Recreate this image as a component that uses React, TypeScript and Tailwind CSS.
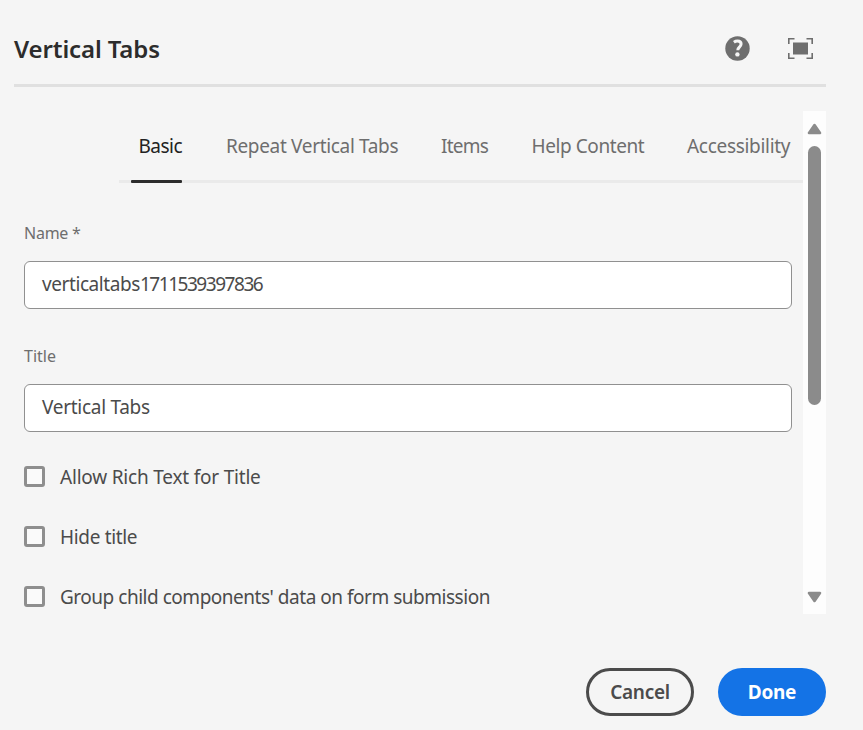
type Item = { label: string; className: string };

const tabs: Item[] = [
  { label: "Basic", className: "w-[87.5px] tracking-[-0.5px] text-[#222]" },
  { label: "Repeat Vertical Tabs", className: "w-[215px] tracking-[-0.33px]" },
  { label: "Items", className: "w-[90.5px] tracking-[-0.75px]" },
  { label: "Help Content", className: "w-[155.5px] tracking-[-0.42px]" },
  { label: "Accessibility", className: "tracking-[-0.3px]" },
];

const options: Item[] = [
  { label: "Allow Rich Text for Title", className: "tracking-[-0.2px]" },
  { label: "Hide title", className: "tracking-[-0.33px]" },
  { label: "Group child components' data on form submission", className: "tracking-[-0.48px]" },
];

function Header() {
  return (
    <header className="flex h-[87px] shrink-0 items-center border-b-[3px] border-[#e0e0e0] pt-[13px]">
      <h1 className="mr-auto text-2xl font-semibold leading-8 tracking-[-0.12px] text-[#2c2c2c]">Vertical Tabs</h1>
      <button aria-label="Help" className="mr-[38px]">
        <svg width="25" height="25" viewBox="0 0 25 25" className="block">
          <circle cx="12.5" cy="12.5" r="12.2" fill="#6e6e6e" />
          <path d="M8.9 6.2c1.1-.8 2.3-1.2 3.6-1.2 2.3 0 3.6 1.2 3.6 3.1 0 1.6-.9 2.5-2 3.4-1 .8-1.3 1.4-1.3 2.7" fill="none" stroke="#f5f5f5" strokeWidth="3" />
          <circle cx="12.4" cy="18.4" r="2.2" fill="#f5f5f5" />
        </svg>
      </button>
      <button aria-label="Toggle fullscreen" className="mr-[13px]">
        <svg width="25" height="21" viewBox="0 0 25 21" className="block">
          <rect x="5" y="4.5" width="15" height="12" fill="#6e6e6e" />
          <path d="M.8 6V.8H6.5M18.5.8h5.7V6M24.2 15v5.2h-5.7M6.5 20.2H.8V15" fill="none" stroke="#6e6e6e" strokeWidth="1.6" />
        </svg>
      </button>
    </header>
  );
}

function Tabs() {
  return (
    <nav className="ml-[105px] flex h-[72px] shrink-0 flex-col">
      <div className="flex h-[69px] items-center whitespace-nowrap pl-[19.5px] text-[19px] leading-6 text-[#6e6e6e]">
        {tabs.map((t) => (
          <span key={t.label} className={"shrink-0 " + t.className}>{t.label}</span>
        ))}
      </div>
      <div className="h-[3px] bg-[#eaeaea] pl-3">
        <div className="h-[3px] w-[51px] rounded-[1px] bg-[#2c2c2c]" />
      </div>
    </nav>
  );
}

function Scrollbar() {
  return (
    <div className="flex w-[23px] shrink-0 flex-col items-center bg-[#fdfdfd] pb-[11px] pt-3">
      <svg width="15" height="12" viewBox="0 0 15 12">
        <path d="M7.5 2 13 10H2Z" fill="#8b8b8b" stroke="#8b8b8b" strokeWidth="2.6" strokeLinejoin="round" />
      </svg>
      <div className="mt-[11px] h-[259px] w-[13px] rounded-full bg-[#8b8b8b]" />
      <svg className="mt-auto" width="15" height="12" viewBox="0 0 15 12">
        <path d="M7.5 10 13 2H2Z" fill="#8b8b8b" stroke="#8b8b8b" strokeWidth="2.6" strokeLinejoin="round" />
      </svg>
    </div>
  );
}

const fieldClass =
  "flex h-12 items-center rounded-[6px] border border-[#909090] bg-white pb-[2px] pl-[17px] text-[19px] leading-6";

export default function App() {
  return (
    <div className="flex h-[730px] w-[863px] flex-col overflow-hidden bg-[#f5f5f5] pl-3.5 pr-[37px] font-['Noto_Sans','Open_Sans',sans-serif] text-[#4b4b4b]">
      <Header />
      <main className="mt-6 flex h-[503px] shrink-0">
        <section className="flex min-w-0 flex-1 flex-col overflow-hidden">
          <Tabs />
          <div className="flex flex-col pl-2.5 pr-[11px]">
            <label className="mt-[39px] flex h-[39px] items-start text-base leading-[22px] tracking-[-0.25px] text-[#6e6e6e]">Name *</label>
            <div className={fieldClass}>
              <span className="tracking-[-0.42px]">verticaltabs</span>
              <span className="tracking-[-1.46px]">1711539397836</span>
            </div>
            <label className="mt-9 flex h-[39px] items-start text-base leading-[22px] text-[#6e6e6e]">Title</label>
            <div className={fieldClass + " tracking-[-0.28px]"}>Vertical Tabs</div>
            <div className="mt-[34px] flex flex-col gap-9">
              {options.map((o) => (
                <div key={o.label} className="flex h-6 items-center text-[19px] leading-6">
                  <span className="mb-[3px] mr-[15px] size-[21px] rounded-[3px] border-[3px] border-[#8e8e8e] bg-[#fafafa]" />
                  <span className={"mb-[2px] whitespace-nowrap " + o.className}>{o.label}</span>
                </div>
              ))}
            </div>
          </div>
        </section>
        <Scrollbar />
      </main>
      <footer className="mt-[54px] flex h-12 justify-end gap-6 text-[19px]">
        <button className="flex w-[108px] items-center justify-center rounded-full border-[3px] border-[#4b4b4b] font-semibold tracking-[-0.3px]">Cancel</button>
        <button className="flex w-[108px] items-center justify-center rounded-full bg-[#1473e6] font-bold tracking-[-0.3px] text-white">Done</button>
      </footer>
    </div>
  );
}
